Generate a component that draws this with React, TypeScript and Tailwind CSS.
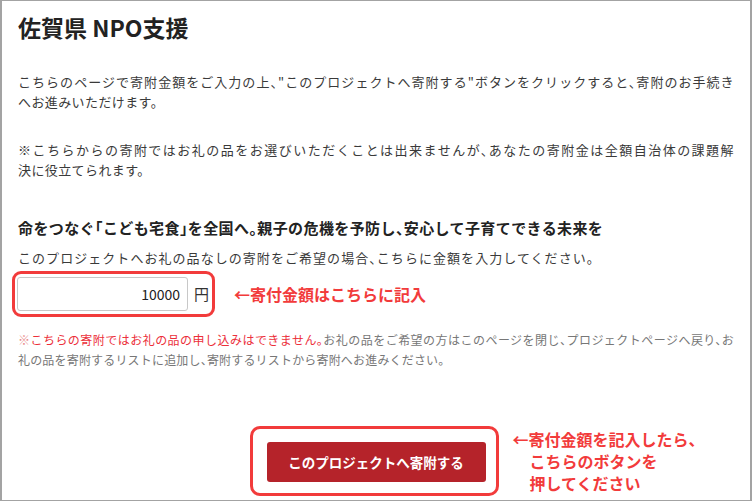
import React from "react";

const red = "text-[#f23b3b]";
const line = "block text-justify [text-align-last:justify]";

export default function App() {
  return (
    <div
      className="relative w-[752px] h-[501px] overflow-hidden bg-white border border-x-2 border-[#a3a3a3] [font-feature-settings:'halt']"
      style={{ fontFamily: '"Noto Sans CJK JP", "Noto Sans", sans-serif' }}
    >
      <div className="px-4">
        {/* Title */}
        <h1 className="pt-[10px] text-[23px] leading-[32px] font-bold text-[#222]">佐賀県 NPO支援</h1>

        {/* Intro */}
        <p className="mt-[29px] text-[13px] leading-[20px] tracking-[0.4px] text-[#3a3a3a]">
          <span className={line}>
            こちらのページで寄附金額をご入力の上、"このプロジェクトへ寄附する"ボタンをクリックすると、寄附のお手続き
          </span>
          <span className="block">へお進みいただけます。</span>
        </p>
        <p className="mt-[28px] text-[13px] leading-[20px] tracking-[0.4px] text-[#3a3a3a]">
          <span className={line}>
            ※こちらからの寄附ではお礼の品をお選びいただくことは出来ませんが、あなたの寄附金は全額自治体の課題解
          </span>
          <span className="block">決に役立てられます。</span>
        </p>

        {/* Project */}
        <h3 className="mt-[36px] text-[15px] leading-[24px] font-bold tracking-[0.4px] text-[#222]">
          命をつなぐ「こども宅食」を全国へ。親子の危機を予防し、安心して子育てできる未来を
        </h3>
        <p className="mt-[8px] text-[13px] leading-[20px] tracking-[1.05px] text-[#3a3a3a]">
          このプロジェクトへお礼の品なしの寄附をご希望の場合、こちらに金額を入力してください。
        </p>

        {/* Amount input */}
        <div className="mt-[3px] flex items-center">
          <div className="-ml-[6px] inline-flex items-center gap-[6px] rounded-[9px] border-[3px] border-[#f23b3b] py-[3px] pl-[2px] pr-[3px]">
            <input
              readOnly
              value="10000"
              className="w-[171px] h-[34px] rounded-[3px] border border-[#c8c8c8] bg-white pr-[7px] text-right text-[14px] text-[#222] outline-none"
            />
            <span className="text-[15px] text-[#333]">円</span>
          </div>
          <span className={`ml-[19px] text-[16px] font-bold ${red}`}>←寄付金額はこちらに記入</span>
        </div>

        {/* Note */}
        <p className="mt-[13px] text-[12px] leading-[20px] tracking-[0.18px] text-[#777]">
          <span className={line}>
            <span className="text-[#e98a8a]">※</span>
            <span className="text-[#ec2f3a]">こちらの寄附ではお礼の品の申し込みはできません。</span>
            お礼の品をご希望の方はこのページを閉じ、プロジェクトページへ戻り、お
          </span>
          <span className="block">礼の品を寄附するリストに追加し、寄附するリストから寄附へお進みください。</span>
        </p>

        {/* Submit */}
        <div className="mt-[72px] flex justify-center">
          <div className="relative">
            <button className="w-[219px] h-[40px] rounded-[3px] bg-[#b5232a] text-[13.5px] font-bold text-white">
              このプロジェクトへ寄附する
            </button>
            <div className="pointer-events-none absolute -left-[17px] -right-[13px] -top-[16px] -bottom-[14px] rounded-[10px] border-[3px] border-[#f23b3b]" />
            <div className={`absolute left-[246px] -top-[14px] w-[230px] text-[16px] leading-[22px] font-bold ${red}`}>
              <div>←寄付金額を記入したら、</div>
              <div className="pl-[17px]">こちらのボタンを</div>
              <div className="pl-[17px]">押してください</div>
            </div>
          </div>
        </div>
      </div>
    </div>
  );
}
